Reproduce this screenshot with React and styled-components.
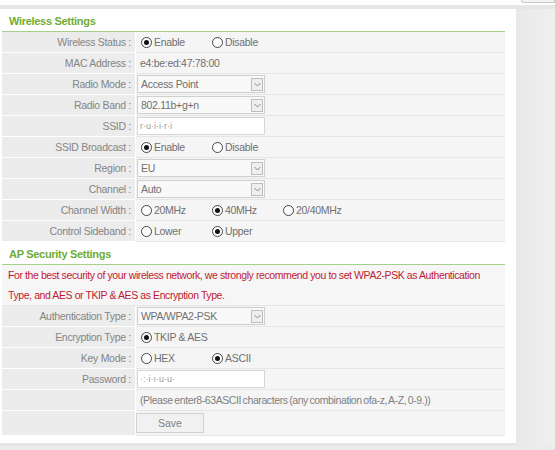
import React from "react";
import styled, { createGlobalStyle } from "styled-components";

const GlobalStyle = createGlobalStyle`
  html, body {
    margin: 0;
    padding: 0;
    background: #ebebeb;
    font-family: "Liberation Sans", Arial, sans-serif;
  }
`;

const wirelessRows = [
  { label: "Wireless Status", type: "radio", options: ["Enable", "Disable"], checked: 0 },
  { label: "MAC Address", type: "text", value: "e4:be:ed:47:78:00" },
  { label: "Radio Mode", type: "select", value: "Access Point" },
  { label: "Radio Band", type: "select", value: "802.11b+g+n" },
  { label: "SSID", type: "input", value: "r·u·i·i·r·i" },
  { label: "SSID Broadcast", type: "radio", options: ["Enable", "Disable"], checked: 0 },
  { label: "Region", type: "select", value: "EU" },
  { label: "Channel", type: "select", value: "Auto" },
  { label: "Channel Width", type: "radio", options: ["20MHz", "40MHz", "20/40MHz"], checked: 1 },
  { label: "Control Sideband", type: "radio", options: ["Lower", "Upper"], checked: 1 },
];

const securityRows = [
  { label: "Authentication Type", type: "select", value: "WPA/WPA2-PSK" },
  { label: "Encryption Type", type: "radio", options: ["TKIP & AES"], checked: 0 },
  { label: "Key Mode", type: "radio", options: ["HEX", "ASCII"], checked: 1 },
  { label: "Password", type: "input", value: "·:·i·ı·u·u·" },
];

export default function App() {
  return (
    <>
      <GlobalStyle />
      <TopStrip>
        <TopButton />
      </TopStrip>
      <Main>
        <Panel>
          <SectionTitle>Wireless Settings</SectionTitle>
          <Table>
            {wirelessRows.map((row) => (
              <FormRow key={row.label} row={row} />
            ))}
          </Table>

          <SectionTitle>AP Security Settings</SectionTitle>
          <Table>
            <Notice>
              For the best security of your wireless network, we strongly recommend you to set
              WPA2-PSK as Authentication Type, and AES or TKIP &amp; AES as Encryption Type.
            </Notice>
            {securityRows.map((row) => (
              <FormRow key={row.label} row={row} />
            ))}
            <Row>
              <LabelCell />
              <ValueCell>
                <Hint>
                  (Please enter8-63ASCII characters (any combination ofa-z, A-Z, 0-9.))
                </Hint>
              </ValueCell>
            </Row>
            <Row $tall $last>
              <LabelCell />
              <ValueCell>
                <SaveButton type="button">Save</SaveButton>
              </ValueCell>
            </Row>
          </Table>
        </Panel>
        <Side />
      </Main>
    </>
  );
}

function FormRow({ row }) {
  return (
    <Row>
      <LabelCell>{row.label} :</LabelCell>
      <ValueCell>{renderValue(row)}</ValueCell>
    </Row>
  );
}

function renderValue(row) {
  if (row.type === "radio") {
    return (
      <RadioGroup>
        {row.options.map((opt, i) => (
          <RadioOption key={opt}>
            <RadioDot $checked={i === row.checked} />
            {opt}
          </RadioOption>
        ))}
      </RadioGroup>
    );
  }
  if (row.type === "select") {
    return (
      <FakeSelect>
        <SelectText>{row.value}</SelectText>
        <ArrowBox>
          <svg width="7" height="5" viewBox="0 0 7 5">
            <path d="M0.5 1 L3.5 4 L6.5 1" fill="none" stroke="#888" strokeWidth="1" />
          </svg>
        </ArrowBox>
      </FakeSelect>
    );
  }
  if (row.type === "input") {
    return <TextBox>{row.value}</TextBox>;
  }
  return <PlainValue>{row.value}</PlainValue>;
}

const TopStrip = styled.div`
  height: 5px;
  background: #fff;
  display: flex;
  justify-content: flex-end;
  overflow: hidden;
`;

const TopButton = styled.div`
  width: 32px;
  height: 2px;
  border: 1px solid #c8c8c8;
  border-top: none;
  border-radius: 0 0 0 4px;
  background: #f4f4f4;
`;

const Main = styled.div`
  display: flex;
  padding-top: 4px;
  background: #e6e6e6;
  height: 437px;
  align-items: flex-start;
`;

const Panel = styled.div`
  width: 516px;
  height: 434px;
  box-sizing: border-box;
  padding: 0 11px 11px 2px;
  background: #fff;
  flex-shrink: 0;
`;

const Side = styled.div`
  flex: 1;
  align-self: stretch;
  background: linear-gradient(to right, #e9e9e9, #efefef);
`;

const SectionTitle = styled.div`
  height: 22px;
  line-height: 24px;
  padding-left: 7px;
  color: #6fac33;
  font-size: 11px;
  font-weight: bold;
  letter-spacing: -0.3px;
  border-bottom: 1px solid #a4d08a;
`;

const Table = styled.div`
  width: 503px;
  display: flex;
  flex-direction: column;
`;

const Row = styled.div`
  display: grid;
  grid-template-columns: 133px 1fr;
  column-gap: 1px;
  height: ${(p) => (p.$tall ? "24px" : "20px")};
  border-bottom: 1px solid ${(p) => (p.$last ? "transparent" : "#fff")};
  background: #fff;
`;

const LabelCell = styled.div`
  background: #ececec;
  color: #858585;
  font-size: 10.5px;
  letter-spacing: -0.3px;
  text-align: right;
  padding-right: 4px;
  line-height: 20px;
  white-space: nowrap;
`;

const ValueCell = styled.div`
  background: #f5f5f5;
  border-bottom: 1px solid #e6e6e6;
  margin-bottom: -1px;
  display: flex;
  align-items: center;
  padding-left: 1px;
  color: #707070;
  font-size: 10.5px;
  letter-spacing: -0.3px;
`;

const Notice = styled.div`
  background: #f6f6f6;
  color: #bf1a33;
  font-size: 10.5px;
  letter-spacing: -0.41px;
  line-height: 20px;
  padding: 0 6px;
  height: 40px;
  border-bottom: 1px solid #e6e6e6;
`;

const PlainValue = styled.span`
  padding-left: 3px;
  color: #707070;
`;

const RadioGroup = styled.div`
  display: flex;
  padding-left: 4px;
`;

const RadioOption = styled.label`
  display: flex;
  align-items: center;
  width: 71px;
  gap: 2px;
  color: #707070;
  white-space: nowrap;
`;

const RadioDot = styled.span`
  width: 9px;
  height: 9px;
  border-radius: 50%;
  border: 1px solid #444;
  background: #fff;
  display: inline-flex;
  align-items: center;
  justify-content: center;
  &::after {
    content: "";
    width: 5px;
    height: 5px;
    border-radius: 50%;
    background: ${(p) => (p.$checked ? "#111" : "transparent")};
  }
`;

const FakeSelect = styled.div`
  width: 128px;
  height: 18px;
  box-sizing: border-box;
  border: 1px solid #cfcfcf;
  background: #f9f9f9;
  display: flex;
  align-items: center;
  justify-content: space-between;
  padding: 0 1px 0 3px;
`;

const SelectText = styled.span`
  color: #707070;
`;

const ArrowBox = styled.span`
  width: 12px;
  height: 13px;
  box-sizing: border-box;
  border: 1px solid #bdbdbd;
  background: #efefef;
  display: flex;
  align-items: center;
  justify-content: center;
`;

const TextBox = styled.div`
  width: 128px;
  height: 18px;
  box-sizing: border-box;
  border: 1px solid #d6d6d6;
  background: #fff;
  padding-left: 2px;
  color: #999;
  font-size: 9px;
  letter-spacing: 0;
  line-height: 16px;
  overflow: hidden;
`;

const Hint = styled.span`
  padding-left: 3px;
  color: #808080;
  letter-spacing: -0.4px;
  word-spacing: -1px;
`;

const SaveButton = styled.button`
  width: 68px;
  height: 20px;
  border: 1px solid #d0d0d0;
  background: #f1f1f1;
  color: #808080;
  font-family: "Liberation Sans", Arial, sans-serif;
  font-size: 10.5px;
  padding: 0;
  margin-left: -1px;
`;
